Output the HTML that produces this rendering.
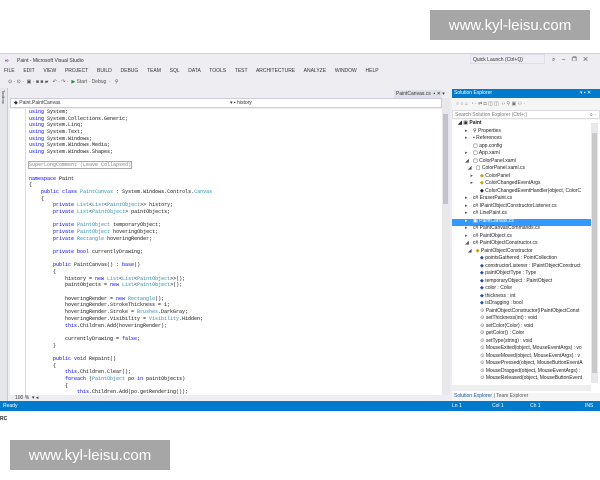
<!DOCTYPE html>
<html><head><style>
*{margin:0;padding:0;box-sizing:border-box}
body{width:600px;height:480px;background:#fff;position:relative;overflow:hidden;font-family:"Liberation Sans",sans-serif;color:#222}
.a{position:absolute;white-space:pre}
.wm{position:absolute;background:#a6a6a6;color:#fff;font-size:15px;display:flex;align-items:center;justify-content:center}
#win{position:absolute;left:0;top:53px;width:600px;height:357px;background:#eeeef2;border-top:1px solid #c8d4e4}
.s{font-size:5px;color:#333}
#code{position:absolute;left:10px;top:55px;width:432px;height:286px;background:#fff;overflow:hidden}
#code div{position:absolute;left:19px;font-family:"Liberation Mono",monospace;font-size:5px;line-height:6.67px;white-space:pre;color:#111}
.k{color:#0000ff}.t{color:#2b91af}
#se{position:absolute;left:452px;top:35px;width:148px;height:312px;background:#f5f5f5}
.r{position:absolute;font-size:5px;line-height:7px;white-space:pre;color:#222}
</style></head><body>
<div class="wm" style="left:430px;top:10px;width:160px;height:30px">www.kyl-leisu.com</div>
<div class="wm" style="left:10px;top:440px;width:160px;height:30px">www.kyl-leisu.com</div>
<div class="a" style="left:0;top:416px;font-size:5px;font-weight:bold">RC</div>
<div id="win">
 <div class="a s" style="left:5px;top:4px;color:#68217a;font-weight:bold">∞</div>
 <div class="a s" style="left:17px;top:4px">Paint - Microsoft Visual Studio</div>
 <div class="a s" style="left:473px;top:3px">Quick Launch (Ctrl+Q)</div>
 <div class="a" style="left:470px;top:0;width:75px;height:10px;border:1px solid #dde"></div>
 <div class="a s" style="left:552px;top:3px;font-size:6px">⌕&nbsp;&nbsp;&nbsp;&nbsp;–&nbsp;&nbsp;&nbsp;&nbsp;❐&nbsp;&nbsp;&nbsp;&nbsp;✕</div>
 <div class="a s" style="left:4px;top:14px;word-spacing:3px">FILE  EDIT  VIEW  PROJECT  BUILD  DEBUG  TEAM  SQL  DATA  TOOLS  TEST  ARCHITECTURE  ANALYZE  WINDOW  HELP</div>
 <div class="a s" style="left:8px;top:25px;color:#555">⊙ · ⊙ ·  ▣ · ■ ■ ▰   ↶ · ↷ ·  <span style="color:#2a8a2a">▶</span> Start · Debug  ·   ⚲</div>
 <div class="a" style="left:0;top:34px;width:8px;height:313px;background:#e6e7ed;border-right:1px solid #ccc"></div>
 <div class="a s" style="left:1px;top:36px;writing-mode:vertical-rl;font-size:4px">Toolbox</div>
 <div class="a" style="left:394px;top:36px;width:48px;height:8px;background:#dfe1ea"></div>
 <div class="a s" style="left:396px;top:37px">PaintCanvas.cs  ▪ ✕ ▾</div>
 <div class="a" style="left:10px;top:44px;width:432px;height:10px;background:#fff;border:1px solid #ccd"></div>
 <div class="a s" style="left:14px;top:46px">◆ Paint.PaintCanvas</div>
 <div class="a s" style="left:230px;top:46px">▾ ▪ history</div>
 <div id="code">
  <div style="left:15px;top:0;width:1px;height:286px;background:#ddd;padding:0"></div>
  <div style="top:0"><span class="k">using</span> System;
<span class="k">using</span> System.Collections.Generic;
<span class="k">using</span> System.Linq;
<span class="k">using</span> System.Text;
<span class="k">using</span> System.Windows;
<span class="k">using</span> System.Windows.Media;
<span class="k">using</span> System.Windows.Shapes;

<span style="color:#888;outline:1px solid #aaa">SuperLongComment (Leave Collapsed)</span>

<span class="k">namespace</span> Paint
{
    <span class="k">public class</span> <span class="t">PaintCanvas</span> : System.Windows.Controls.<span class="t">Canvas</span>
    {
        <span class="k">private</span> <span class="t">List</span>&lt;<span class="t">List</span>&lt;<span class="t">PaintObject</span>&gt;&gt; history;
        <span class="k">private</span> <span class="t">List</span>&lt;<span class="t">PaintObject</span>&gt; paintObjects;

        <span class="k">private</span> <span class="t">PaintObject</span> temporaryObject;
        <span class="k">private</span> <span class="t">PaintObject</span> hoveringObject;
        <span class="k">private</span> <span class="t">Rectangle</span> hoveringRender;

        <span class="k">private bool</span> currentlyDrawing;

        <span class="k">public</span> PaintCanvas() : <span class="k">base</span>()
        {
            history = <span class="k">new</span> <span class="t">List</span>&lt;<span class="t">List</span>&lt;<span class="t">PaintObject</span>&gt;&gt;();
            paintObjects = <span class="k">new</span> <span class="t">List</span>&lt;<span class="t">PaintObject</span>&gt;();

            hoveringRender = <span class="k">new</span> <span class="t">Rectangle</span>();
            hoveringRender.StrokeThickness = 1;
            hoveringRender.Stroke = <span class="t">Brushes</span>.DarkGray;
            hoveringRender.Visibility = <span class="t">Visibility</span>.Hidden;
            <span class="k">this</span>.Children.Add(hoveringRender);

            currentlyDrawing = <span class="k">false</span>;
        }

        <span class="k">public void</span> Repaint()
        {
            <span class="k">this</span>.Children.Clear();
            <span class="k">foreach</span> (<span class="t">PaintObject</span> po <span class="k">in</span> paintObjects)
            {
                <span class="k">this</span>.Children.Add(po.getRendering());</div>
 </div>
 <div class="a" style="left:442px;top:44px;width:8px;height:297px;background:#e8e8ec"></div>
 <div class="a" style="left:443px;top:60px;width:5px;height:90px;background:#c2c3c9"></div>
 <div class="a" style="left:10px;top:341px;width:440px;height:7px;background:#eeeef2"></div>
 <div class="a s" style="left:15px;top:341px">100 %  ▾ ◂</div>
 <div id="se">
  <div class="a" style="left:0;top:0;width:148px;height:9px;background:#007acc"></div>
  <div class="a s" style="left:2px;top:1px;color:#fff">Solution Explorer</div>
  <div class="a s" style="left:128px;top:1px;color:#fff">▾ ▪ ✕</div>
  <div class="a s" style="left:4px;top:12px;color:#777">○ ○ ⌂  ◔ · ⇄ ◘ ◫ ◫  ‹› ⚲ ▣ ⚇ ·</div>
  <div class="a" style="left:0;top:21px;width:148px;height:9px;background:#fff;border:1px solid #ddd"></div>
  <div class="a s" style="left:3px;top:23px;color:#777">Search Solution Explorer (Ctrl+;)</div>
  <div class="a s" style="left:138px;top:23px">⌕ ·</div>
  <div class="a" style="left:0;top:31px;width:148px;height:273px;background:#fff"></div>
  <div class="a" style="left:139px;top:34px;width:7px;height:260px;background:#e8e8ec"></div>
  <div class="a" style="left:140px;top:44px;width:5px;height:240px;background:#c8c8cc"></div>
  <div class="a" style="left:0;top:129.5px;width:139px;height:7px;background:#3399ff"></div>
  <div class="a" style="left:0;top:296px;width:139px;height:6px;background:#eee"></div>
  <div class="a s" style="left:2px;top:304px;color:#1e5aa8">Solution Explorer <span style="color:#555">| Team Explorer</span></div>
 </div>
 <div class="a" style="left:0;top:347px;width:600px;height:10px;background:#007acc"></div>
 <div class="a s" style="left:3px;top:349px;color:#fff">Ready</div>
 <div class="a s" style="left:452px;top:349px;color:#fff">Ln 1</div>
 <div class="a s" style="left:492px;top:349px;color:#fff">Col 1</div>
 <div class="a s" style="left:530px;top:349px;color:#fff">Ch 1</div>
 <div class="a s" style="left:585px;top:349px;color:#fff">INS</div>
</div>
<div class="r" style="left:458px;top:120px;line-height:7.5px;font-weight:bold">◢ <span style="font-weight:normal">▣</span> Paint</div>
<div class="r" style="left:465px;top:127.5px;line-height:7.5px;color:#555">▸
▸
 
▸
◢
  ◢
    ▸
    ▸
 
▸
▸
▸
<span style="color:#fff">▸</span>
▸
▸
◢
  ◢</div>
<div class="r" style="left:473px;top:127.5px;line-height:7.5px">⚲ Properties
▪ References
▢ app.config
▢ App.xaml
▢ ColorPanel.xaml
  ▢ ColorPanel.xaml.cs
     <span style="color:#c8a000">◆</span> ColorPanel
     <span style="color:#c8a000">◆</span> ColorChangedEventArgs
     ◆ ColorChangedEventHandler(object, ColorC
c# EraserPaint.cs
c# IPaintObjectConstructorListener.cs
c# LinePaint.cs
<span style="color:#fff">▣ PaintCanvas.cs</span>
c# PaintCanvasCommands.cs
c# PaintObject.cs
c# PaintObjectConstructor.cs
  <span style="color:#c8a000">◆</span> PaintObjectConstructor
     <span style="color:#2050a0">◆</span> pointsGathered : PointCollection
     <span style="color:#2050a0">◆</span> constructorListener : IPaintObjectConstruct
     <span style="color:#2050a0">◆</span> paintObjectType : Type
     <span style="color:#2050a0">◆</span> temporaryObject : PaintObject
     <span style="color:#2050a0">◆</span> color : Color
     <span style="color:#2050a0">◆</span> thickness : int
     <span style="color:#2050a0">◆</span> isDragging : bool
     <span style="color:#888">⚙</span> PaintObjectConstructor(IPaintObjectConst
     <span style="color:#888">⚙</span> setThickness(int) : void
     <span style="color:#888">⚙</span> setColor(Color) : void
     <span style="color:#888">⚙</span> getColor() : Color
     <span style="color:#888">⚙</span> setType(string) : void
     <span style="color:#888">⚙</span> MouseExited(object, MouseEventArgs) : vo
     <span style="color:#888">⚙</span> MouseMoved(object, MouseEventArgs) : v
     <span style="color:#888">⚙</span> MousePressed(object, MouseButtonEventA
     <span style="color:#888">⚙</span> MouseDragged(object, MouseEventArgs) :
     <span style="color:#888">⚙</span> MouseReleased(object, MouseButtonEvent</div>
</body></html>
